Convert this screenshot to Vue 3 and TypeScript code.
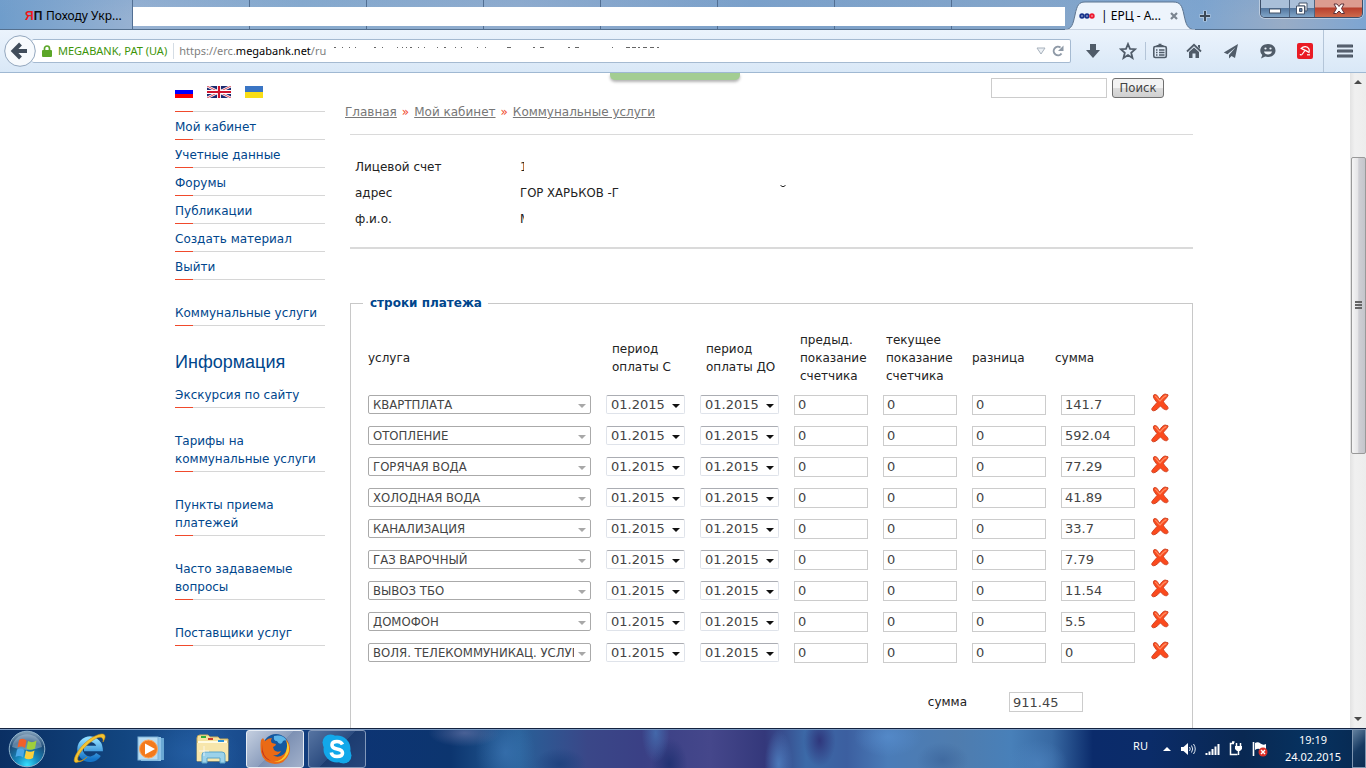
<script setup lang="ts">
import { ref } from 'vue'

interface PaymentRow {
  service: string
  from: string
  to: string
  previous: string
  current: string
  difference: string
  amount: string
}

const makeRow = (service: string, amount: string): PaymentRow => ({
  service,
  from: '01.2015',
  to: '01.2015',
  previous: '0',
  current: '0',
  difference: '0',
  amount,
})

const rows = ref<PaymentRow[]>([
  makeRow('КВАРТПЛАТА', '141.7'),
  makeRow('ОТОПЛЕНИЕ', '592.04'),
  makeRow('ГОРЯЧАЯ ВОДА', '77.29'),
  makeRow('ХОЛОДНАЯ ВОДА', '41.89'),
  makeRow('КАНАЛИЗАЦИЯ', '33.7'),
  makeRow('ГАЗ ВАРОЧНЫЙ', '7.79'),
  makeRow('ВЫВОЗ ТБО', '11.54'),
  makeRow('ДОМОФОН', '5.5'),
  makeRow('ВОЛЯ. ТЕЛЕКОММУНИКАЦ. УСЛУГИ', '0'),
])

const total = ref('911.45')
const query = ref('')

const accountMenu = ['Мой кабинет', 'Учетные данные', 'Форумы', 'Публикации', 'Создать материал', 'Выйти']
const infoMenu = [
  'Экскурсия по сайту',
  'Тарифы на коммунальные услуги',
  'Пункты приема платежей',
  'Часто задаваемые вопросы',
  'Поставщики услуг',
]

const removeRow = (index: number) => rows.value.splice(index, 1)
</script>

<template>
  <div class="window">
    <header class="tabs">
      <div class="tab">
        <span class="fav"><b>Я</b>П</span>
        <span>Походу Укр...</span>
      </div>
      <div class="tab-strip"><div class="blank"></div></div>
      <div class="active-tab">
        <svg class="tab-shape" viewBox="0 0 130 30" width="130" height="30" aria-hidden="true">
          <path d="M0 30C7 29 8 24 10 15C12 5 14 2 20 2H108C115 2 117 5 119 15C121 24 122 29 130 30Z" fill="#edf4fc" stroke="#5d7590" />
          <path d="M0 30H130" stroke="#e8f1fa" stroke-width="1" />
        </svg>
        <svg class="dots" viewBox="0 0 16 6" width="16" height="6" aria-hidden="true">
          <g fill="none" stroke-width="2"><circle cx="3" cy="3" r="1.7" stroke="#18348c" /><circle cx="8" cy="3" r="1.7" stroke="#18348c" /><circle cx="13" cy="3" r="1.7" stroke="#ef1a30" /></g>
        </svg>
        <span class="tab-title">| ЕРЦ - А...</span>
        <button class="bare" aria-label="Закрыть вкладку">
          <svg viewBox="0 0 8 8" width="8" height="8"><path d="M1 1L7 7M7 1L1 7" stroke="#7b8590" stroke-width="2.2" /></svg>
        </button>
      </div>
      <button class="bare new-tab" aria-label="Новая вкладка">
        <svg viewBox="0 0 12 12" width="12" height="12"><path d="M6 0.5V11.500M.5 6H11.500" stroke="#dce7f2" stroke-width="4" opacity=".5" /><path d="M6 1V11M1 6H11" stroke="#3d4a58" stroke-width="2" /></svg>
      </button>
      <div class="win-buttons">
        <button class="wb" aria-label="Свернуть"><svg viewBox="0 0 14 12" width="14" height="12"><rect x="1.500" y="6" width="11" height="4" fill="#fff" stroke="#45546b" /></svg></button>
        <button class="wb mid" aria-label="Развернуть"><svg viewBox="0 0 14 13" width="14" height="13"><path d="M4 1H12V9H10V4H4Z" fill="#fff" stroke="#45546b" /><path d="M1.500 4H9.500V12H1.500ZM4.500 6.500V9.500H7V6.500Z" fill="#fff" fill-rule="evenodd" stroke="#45546b" /></svg></button>
        <button class="wb close" aria-label="Закрыть"><svg viewBox="0 0 14 12" width="14" height="12"><path d="M2 1H5L7 3.500L9 1H12L9.500 5.500L12.500 10.500H9.500L7 8L4.500 10.500H1.500L4.500 5.500Z" fill="#fff" stroke="#5c3038" /></svg></button>
      </div>
    </header>

    <div class="navbar">
      <button class="bare back" aria-label="Назад">
        <svg viewBox="0 0 32 32" width="32" height="32"><circle cx="16" cy="16" r="15.3" fill="#f7fafd" stroke="#92a6bd" /><path d="M16.500 9L9.500 16L16.500 23M10 16H23" fill="none" stroke="#414d5b" stroke-width="4" /></svg>
      </button>
      <div class="url">
        <svg class="lock" viewBox="0 0 10 12" width="10" height="12" aria-hidden="true"><path d="M2.500 6V3.500A2.500 2.500 0 0 1 7.500 3.500V6" fill="none" stroke="#5ba628" stroke-width="1.700" /><rect y="5" width="10" height="7" rx="1" fill="#5ba628" /></svg>
        <span class="identity">MEGABANK, PAT (UA)</span>
        <span class="address">https://erc.<b>megabank.net</b>/ru</span>
        <svg class="trace" viewBox="0 0 336 4" width="336" height="4" aria-hidden="true"><path d="M8 1.500h2M16 1.500h1M23 1.500h1M29 1.500h1M48 1.500h2M56 1.500h1M71 1.500h1M76 1.500h1M80 1.500h1M84 1.500h2M92 1.500h1M98 1.500h1M111 1.500h1M118 1.500h2M129 1.500h1M135 1.500h1M151 1.500h1M159 1.500h1M181 1.500h4M207 1.500h2M214 1.500h4M242 1.500h2M249 1.500h4M286 1.500h1M300 1.500h4M306 1.500h4M312 1.500h2M317 1.500h4M324 1.500h4M331 1.500h2" stroke="#666" /></svg>
        <svg class="drop" viewBox="0 0 10 8" width="10" height="8" aria-hidden="true"><path d="M1 1H9L5 7Z" fill="#edf1f5" stroke="#a8b2bd" /></svg>
        <button class="bare" aria-label="Обновить"><svg viewBox="0 0 12 12" width="12" height="12"><path d="M9.500 8.500A4.300 4.300 0 1 1 8.500 2.500" fill="none" stroke="#8e99a6" stroke-width="2" /><path d="M11.500 .5V6H6Z" fill="#8e99a6" /></svg></button>
      </div>
      <button class="tool" aria-label="Загрузки"><svg viewBox="0 0 16 16" width="16" height="16"><path d="M5 1H11V7H15L8 15L1 7H5Z" fill="#505c69" /></svg></button>
      <button class="tool star" aria-label="В закладки"><svg viewBox="0 0 18 18" width="18" height="18"><path d="M9 2L11 6.800L16.200 7.200L12.200 10.700L13.500 16L9 13.100L4.500 16L5.800 10.700L1.800 7.200L7 6.800Z" fill="none" stroke="#505c69" stroke-width="1.800" /></svg></button>
      <button class="tool list" aria-label="Закладки"><svg viewBox="0 0 16 16" width="16" height="16"><rect x="1.800" y="3.500" width="12.500" height="11" rx="1.500" fill="none" stroke="#505c69" stroke-width="1.600" /><path d="M4.500 4V2H6.500V.8H9.500V2H11.500V4Z" fill="#505c69" /><path d="M4 7H5.500M7 7H12.500M4 9.500H5.500M7 9.500H12.500M4 12H5.500M7 12H12.500" stroke="#505c69" stroke-width="1.300" /></svg></button>
      <button class="tool" aria-label="Домой"><svg viewBox="0 0 16 16" width="16" height="16"><path d="M1 8.500L8 1.800L15 8.500" fill="none" stroke="#505c69" stroke-width="1.800" /><path d="M12 2H14V6L12 4ZM3 9L8 4.500L13 9V15H9.500V10.500H6.500V15H3Z" fill="#505c69" /></svg></button>
      <button class="tool" aria-label="Поделиться"><svg viewBox="0 0 16 16" width="16" height="16"><path d="M15 1L.8 9.500L4.500 11.300L12.500 4.500L6 12V15.500L8.500 13L12 15Z" fill="#505c69" /></svg></button>
      <button class="tool" aria-label="Чат"><svg viewBox="0 0 18 16" width="18" height="16"><path d="M9 1C13.500 1 16.500 3.800 16.500 7.500S13.500 14 9 14C8 14 7 13.900 6.200 13.600L2 15.500L3.300 12C2 10.800 1.300 9.300 1.300 7.500C1.300 3.800 4.500 1 9 1Z" fill="#505c69" /><path d="M5 8.500H13C12.500 12.500 5.500 12.500 5 8.500Z" fill="#edf4fb" /><circle cx="6.500" cy="5.500" r="1.100" fill="#edf4fb" /><circle cx="11.500" cy="5.500" r="1.100" fill="#edf4fb" /></svg></button>
      <button class="tool" aria-label="Avira"><svg viewBox="0 0 16 16" width="16" height="16"><rect width="16" height="16" rx="2" fill="#e91b24" /><path d="M4.200 5.500C6.500 2.800 10.500 3 12 6C12.500 7.500 12.300 8.500 12 9.500C9.500 7.500 6.500 6.500 4.200 5.500Z" fill="none" stroke="#fff" stroke-width="1.200" /><path d="M8 7.500L5 11.500C4.300 12.400 3.200 12 3.300 11" fill="none" stroke="#fff" stroke-width="1.200" /><path d="M10 11.800H13" stroke="#fff" stroke-width="1.200" /></svg></button>
      <button class="tool menu" aria-label="Меню"><svg viewBox="0 0 16 14" width="16" height="14"><path d="M1 2H15M1 7H15M1 12H15" stroke="#46515e" stroke-width="3" stroke-linecap="round" /><path d="M1 2H15M1 7H15M1 12H15" stroke="#66717e" /></svg></button>
    </div>

    <div class="viewport">
      <div class="page">
        <div class="green"></div>
        <div class="site">
          <aside>
            <div class="flags">
              <a href="#" aria-label="Русский"><svg viewBox="0 0 18 12" width="18" height="12"><rect width="18" height="12" fill="#fff" /><rect y="4" width="18" height="4" fill="#00f" /><rect y="8" width="18" height="4" fill="#f00" /></svg></a>
              <a href="#" aria-label="English"><svg viewBox="0 0 24 12" width="24" height="12"><rect width="24" height="12" fill="#1b2a70" /><path d="M0 0L24 12M24 0L0 12" stroke="#fff" stroke-width="2.500" /><path d="M0 0L24 12M24 0L0 12" stroke="#d0142c" stroke-width=".8" /><path d="M12 0V12M0 6H24" stroke="#fff" stroke-width="4" /><path d="M12 0V12M0 6H24" stroke="#d0142c" stroke-width="2.200" /></svg></a>
              <a href="#" aria-label="Українська"><svg viewBox="0 0 18 12" width="18" height="12"><rect width="18" height="6" fill="#3a75c4" /><rect y="6" width="18" height="6" fill="#f9dd16" /></svg></a>
            </div>
            <nav class="first">
              <a v-for="item in accountMenu" :key="item" href="#" class="item">{{ item }}</a>
            </nav>
            <nav class="spaced"><a href="#" class="item">Коммунальные услуги</a></nav>
            <h2>Информация</h2>
            <nav class="spaced info">
              <a v-for="item in infoMenu" :key="item" href="#" class="item">{{ item }}</a>
            </nav>
          </aside>

          <main>
            <form class="search" @submit.prevent>
              <input v-model="query" type="text" aria-label="Поиск по сайту" />
              <button type="submit">Поиск</button>
            </form>
            <div class="crumbs">
              <a href="#">Главная</a><span>»</span><a href="#">Мой кабинет</a><span>»</span><a href="#">Коммунальные услуги</a>
            </div>
            <dl>
              <div><dt>Лицевой счет</dt><dd><span class="sliver">1</span></dd></div>
              <div>
                <dt>адрес</dt>
                <dd>
                  <span class="street">ГОР ХАРЬКОВ -Г</span>
                  <svg class="breve" viewBox="0 0 6 3" width="6" height="3" aria-hidden="true"><path d="M.5 .5Q3 3 5.500 .5" fill="none" stroke="#222" /></svg>
                </dd>
              </div>
              <div><dt>ф.и.о.</dt><dd><span class="sliver">М</span></dd></div>
            </dl>

            <fieldset>
              <legend>строки платежа</legend>
              <table>
                <colgroup>
                  <col class="c-service" /><col class="c-date" /><col class="c-date" /><col class="c-num" /><col class="c-num" /><col class="c-diff" /><col class="c-sum" /><col />
                </colgroup>
                <thead>
                  <tr>
                    <th scope="col">услуга</th>
                    <th scope="col" class="in">период<br />оплаты С</th>
                    <th scope="col" class="in">период<br />оплаты ДО</th>
                    <th scope="col" class="in">предыд.<br />показание<br />счетчика</th>
                    <th scope="col" class="near">текущее<br />показание<br />счетчика</th>
                    <th scope="col">разница</th>
                    <th scope="col">сумма</th>
                    <td></td>
                  </tr>
                </thead>
                <tbody>
                  <tr v-for="(row, i) in rows" :key="row.service">
                    <td><span class="pick service"><select v-model="row.service" aria-label="услуга"><option>{{ row.service }}</option></select></span></td>
                    <td><span class="pick date"><select v-model="row.from" aria-label="период оплаты С"><option>01.2015</option></select></span></td>
                    <td><span class="pick date"><select v-model="row.to" aria-label="период оплаты ДО"><option>01.2015</option></select></span></td>
                    <td><input v-model="row.previous" type="text" aria-label="предыдущее показание счетчика" /></td>
                    <td><input v-model="row.current" type="text" aria-label="текущее показание счетчика" /></td>
                    <td><input v-model="row.difference" type="text" aria-label="разница" /></td>
                    <td class="sum"><input v-model="row.amount" type="text" aria-label="сумма" /></td>
                    <td>
                      <button type="button" class="bare" aria-label="Удалить строку" @click="removeRow(i)">
                        <svg viewBox="0 0 18 19" width="18" height="19"><path d="M3.500 1.500C6 1 7 4 8.500 6C10 4 11.500 1.500 14 1L17 1.800C17.500 3.500 13.500 6.500 12.500 8.500C13.500 11.500 17.500 13 17 15.500C15.500 18.500 11.500 15.500 9.500 13C7.500 14.500 5 18 2.500 17.800C0 17.500 .5 15.500 2 14L6 9.500C4.500 7.500 3 6 2.500 4C2.300 2.500 2.500 1.800 3.500 1.500Z" fill="#fb4a1d" stroke="#d04424" /><path d="M4 3C6 4 7 6.500 9 8C11 6 13 3 15.500 2.500" fill="none" stroke="#ff8a60" stroke-width="1.300" /></svg>
                      </button>
                    </td>
                  </tr>
                </tbody>
              </table>
              <div class="total">
                <label for="total">сумма</label>
                <input id="total" v-model="total" type="text" />
              </div>
            </fieldset>
          </main>
        </div>
      </div>
      <div class="scrollbar">
        <svg viewBox="0 0 8 4" width="8" height="4" aria-hidden="true"><path d="M0 4L4 0L8 4Z" fill="#4a4a4a" /></svg>
        <div class="track"><div class="thumb"><i></i><i></i><i></i></div></div>
        <svg viewBox="0 0 8 4" width="8" height="4" aria-hidden="true"><path d="M0 0L4 4L8 0Z" fill="#4a4a4a" /></svg>
      </div>
    </div>

    <footer>
      <button class="bare orb" aria-label="Пуск">
        <svg viewBox="0 0 38 38" width="38" height="38">
          <defs>
            <radialGradient id="orb" cx=".5" cy=".95" r=".9"><stop offset="0" stop-color="#35e0ff" /><stop offset=".35" stop-color="#1789bd" /><stop offset=".75" stop-color="#1c4a77" /><stop offset="1" stop-color="#7b9ab4" /></radialGradient>
          </defs>
          <circle cx="19" cy="19" r="17.800" fill="url(#orb)" stroke="#8fb3cc" />
          <path d="M4 17A15.200 15.200 0 0 1 34 17Q19 23 4 17Z" fill="#d7e6f0" opacity=".35" />
          <path d="M11 10Q15 7.500 18.500 10.500L17 18Q13.500 15.500 9.500 17.500Z" fill="#f0602a" />
          <path d="M20 11Q24 13.500 28.500 10.500L27 18.500Q22.500 21 18.500 18.500Z" fill="#9fcf3c" />
          <path d="M9 19.500Q13 17.500 16.500 20L15 27.500Q11.500 25 7.500 27Z" fill="#4aa8e8" />
          <path d="M18 20.500Q22 23 26.500 20.500L25 28Q20.500 30.500 16.500 28Z" fill="#fbd03c" />
        </svg>
      </button>
      <button class="bare app" aria-label="Internet Explorer">
        <svg viewBox="0 0 34 34" width="34" height="34">
          <defs><linearGradient id="ie" x2="0" y2="1"><stop stop-color="#8edcff" /><stop offset="1" stop-color="#1474c8" /></linearGradient></defs>
          <path d="M26.500 22.500A10 10 0 1 1 28 16.500H12" fill="none" stroke="url(#ie)" stroke-width="5.500" />
          <path d="M6 30C-1 33 2 22 12 12C20 4 32 -1 33 4C33.500 6 32 8 31 10C32 5 28 3 20 9C8 18 3 28 7 29C10 29 13 27 15 25C12 28 9 30 6 30Z" fill="#f4c432" stroke="#c98e14" stroke-width=".6" />
        </svg>
      </button>
      <button class="bare app" aria-label="Windows Media Player">
        <svg viewBox="0 0 28 28" width="28" height="28"><rect x="7" y="3" width="20" height="22" fill="#6aa8d4" /><rect x="4" y="2" width="20" height="24" fill="#8fc4e8" /><rect x="1" y="2" width="20" height="23" fill="#b8dcf2" stroke="#7db2d8" /><circle cx="11.500" cy="14" r="9" fill="#f47a1c" stroke="#fca65c" /><path d="M8 8.500L18 14L8 19.500Z" fill="#fff" /></svg>
      </button>
      <button class="bare app" aria-label="Проводник">
        <svg viewBox="0 0 34 30" width="34" height="30"><path d="M1 4Q1 1 4 1H12L14 3H22L24 5H32V27H1Z" fill="#f5e2a0" stroke="#c9ac5c" /><path d="M1 9H32V27H1Z" fill="#f7e6ab" /><path d="M2 8H31" stroke="#fffbe2" stroke-width="2" /><rect x="5" y="2" width="5" height="2" fill="#2fae3c" /><rect x="12" y="4" width="5" height="2" fill="#cf3d2b" /><rect x="22" y="6" width="6" height="2" fill="#2a92d8" /><path d="M6 29V21Q6 18 9 18H26Q29 18 29 21V29H24V24H11V29Z" fill="#9bd2ea" stroke="#5ba4c8" /><path d="M8 12V22M3 17H13" stroke="#fff" opacity=".7" /></svg>
      </button>
      <button class="running current" aria-label="Firefox">
        <svg viewBox="0 0 32 32" width="32" height="32"><circle cx="17" cy="14" r="13" fill="#15589f" /><path d="M15 3Q24 1 28 8Q24 6 23 10Q20 12 18 8Q14 8 15 3Z" fill="#5cb5e8" /><path d="M2 7L4 5L6 8Q9 5 13 5Q11 8 13 10L17 11Q17 13 14 14L15 17Q18 20 22 18Q20 23 14 22Q19 26 25 21Q30 16 27 6Q33 13 30 21Q26 31 16 31Q4 30 2 19Q1 12 2 7Z" fill="#ea6a16" /><path d="M27 7Q32 14 29 21Q24 30 15 29Q25 27 27 19Q29 12 27 7Z" fill="#fbc92d" /><path d="M3 11Q3 24 12 28Q5 26 3 19Z" fill="#c8341c" /></svg>
      </button>
      <button class="running skype" aria-label="Skype">
        <svg viewBox="0 0 32 32" width="32" height="32"><circle cx="16" cy="16" r="13.500" fill="#12a8ea" /><circle cx="9.500" cy="9.500" r="8" fill="#12a8ea" /><circle cx="22.500" cy="22.500" r="8" fill="#12a8ea" /><path d="M21.500 11.500Q20 8.500 16 8.500Q11 8.500 11 12Q11 15 16 16Q21.500 17 21.500 20Q21.500 23.500 16 23.500Q11 23.500 10.300 19.500" fill="none" stroke="#fff" stroke-width="3.600" /></svg>
      </button>
      <div class="tray">
        <span class="lang">RU</span>
        <svg viewBox="0 0 8 4" width="8" height="4" aria-hidden="true"><path d="M0 4L4 0L8 4Z" fill="#fff" /></svg>
        <svg viewBox="0 0 16 14" width="16" height="14" aria-hidden="true"><path d="M1 5H3.500L8 1V13L3.500 9H1Z" fill="#fff" /><path d="M9.500 5Q11 7 9.500 9M11.500 3.500Q14 7 11.500 10.500M13.500 2Q17 7 13.500 12" fill="none" stroke="#dfe8f2" /></svg>
        <svg viewBox="0 0 15 12" width="15" height="12" aria-hidden="true"><path d="M1.500 12V10M4.500 12V8.500M7.500 12V6M10.500 12V3.500M13.500 12V1" stroke="#fff" stroke-width="2" /></svg>
        <svg viewBox="0 0 14 15" width="14" height="15" aria-hidden="true"><path d="M8.500 13.500H1.500V2.500H5M3 1H5.500" fill="none" stroke="#fff" stroke-width="1.500" /><path d="M6 5H13V8L11 10H8L6 8Z" fill="#fff" /><path d="M7.500 5V2M11.500 5V2M9.500 10V14" stroke="#fff" stroke-width="1.500" /></svg>
        <svg viewBox="0 0 16 16" width="16" height="16" aria-hidden="true"><path d="M1.500 1V15" stroke="#fff" stroke-width="1.600" /><path d="M3 2Q6 .5 8.500 2.500T14 3V9Q11 10 8.500 8.500T3 9Z" fill="#fff" /><circle cx="11" cy="11" r="4.500" fill="#dc3028" /><path d="M9 9L13 13M13 9L9 13" stroke="#fff" stroke-width="1.400" /></svg>
        <div class="clock"><span>19:19</span><span>24.02.2015</span></div>
        <button class="show-desktop" aria-label="Показать рабочий стол"></button>
      </div>
    </footer>
  </div>
</template>

<style>
html,
body {
  margin: 0;
  overflow: hidden;
}
</style>

<style scoped>
.window {
  display: flex;
  flex-direction: column;
  height: 100vh;
  font: 12px/16px 'Noto Sans', sans-serif;
  background: #fff;
}
svg {
  display: block;
  flex: none;
}
* {
  box-sizing: border-box;
}
.bare {
  padding: 0;
  border: 0;
  background: none;
}

/* Tab strip */
.tabs {
  display: flex;
  height: 30px;
  flex: none;
  background: linear-gradient(rgba(120, 160, 205, 0.25), rgba(255, 255, 255, 0) 60%),
    linear-gradient(90deg, #6f9dcb, #98b2d2 10%, #88abce 22%, #92adce 38%, #7ba0c9 55%, #86a6c9 75%, #7ea5cf 88%, #98acc6 94%, #7da5d2);
  border-bottom: 1px solid #54708f;
}
.tab {
  display: flex;
  align-items: center;
  gap: 6px;
  width: 133px;
  padding: 2px 0 0 25px;
  border-right: 1px solid #526f93;
}
.fav {
  display: flex;
  width: 15px;
  font: bold 12px/16px 'Liberation Sans', sans-serif;
  color: #111;
}
.fav b {
  color: #f01818;
}
.tab-strip {
  flex: 1;
  padding: 7px 0 3px;
  background: repeating-linear-gradient(90deg, transparent 0 116px, #526f93 116px 117px);
}
.blank {
  height: 19px;
  background: #fff;
}
.active-tab {
  position: relative;
  display: flex;
  align-items: center;
  width: 128px;
  padding: 3px 15px 0 14px;
  flex: none;
  z-index: 1;
}
.tab-shape {
  position: absolute;
  inset: 0;
}
.dots,
.tab-title,
.active-tab .bare {
  position: relative;
}
.tab-title {
  flex: 1;
  padding-left: 6px;
  white-space: nowrap;
}
.new-tab {
  width: 24px;
  display: grid;
  place-items: center;
  padding-top: 3px;
}
.win-buttons {
  display: flex;
  height: 18px;
  margin: 0 3px 0 43px;
  border: 1px solid #3d4e68;
  border-top: 0;
  border-radius: 0 0 5px 5px;
  overflow: hidden;
  box-shadow: 0 0 0 1px rgba(255, 255, 255, 0.4);
}
.wb {
  display: grid;
  place-items: center;
  width: 28px;
  padding: 0;
  border: 0;
  background: linear-gradient(#a9bfd9 45%, #54779f 50%, #80a5c8);
}
.wb.mid {
  width: 26px;
  border: solid #4f6480;
  border-width: 0 1px;
}
.wb.close {
  width: 47px;
  background: linear-gradient(#dc9c90 40%, #b8402e 48%, #cd6a4c);
}

/* Navigation bar */
.navbar {
  display: flex;
  align-items: center;
  height: 43px;
  flex: none;
  padding-left: 4px;
  background: linear-gradient(#ebf3fc, #d9e8f7);
  border-bottom: 1px solid #9fb8d2;
}
.back {
  z-index: 1;
}
.url {
  display: flex;
  align-items: center;
  flex: 1;
  height: 24px;
  min-width: 0;
  margin: 0 3px 0 -4px;
  padding: 0 6px 0 10px;
  background: #fff;
  border: 1px solid #a5bad1;
  border-left: 0;
  border-radius: 2px;
  font-size: 11px;
}
.identity {
  margin-left: 6px;
  padding-right: 6px;
  border-right: 1px solid #d5dde5;
  color: #3c9408;
  white-space: nowrap;
}
.address {
  padding-left: 5px;
  color: #808080;
  white-space: nowrap;
}
.address b {
  font-weight: 400;
  color: #000;
}
.trace {
  align-self: flex-start;
  margin: 6px auto 0 0;
}
.drop {
  margin-right: 6px;
}
.tool {
  display: grid;
  place-items: center;
  width: 37px;
  height: 100%;
  padding: 0;
  border: 0;
  background: none;
}
.tool.star {
  width: 34px;
}
.tool.list {
  width: 30px;
  background: linear-gradient(#b4c5d8, #b4c5d8) left center / 1px 18px no-repeat;
}
.tool.menu {
  width: 43px;
  border-left: 1px solid #b4c5d8;
}

/* Page */
.viewport {
  display: flex;
  flex: 1;
  min-height: 0;
}
.page {
  position: relative;
  flex: 1;
  overflow: hidden;
  font: 12px/18px 'DejaVu Sans', sans-serif;
  color: #222;
}
.green {
  position: absolute;
  top: 0;
  left: 50%;
  width: 130px;
  height: 7px;
  margin-left: -65px;
  border-radius: 0 0 5px 5px;
  background: #a3cd92;
  box-shadow: 0 2px 3px rgba(0, 0, 0, 0.3);
}
.site {
  display: flex;
  gap: 20px;
  max-width: 1036px;
  margin: 0 auto;
  padding-left: 18px;
}
aside {
  width: 150px;
  flex: none;
}
.flags {
  display: flex;
  gap: 14px;
  height: 38px;
  padding-top: 13px;
}
nav {
  display: flex;
  flex-direction: column;
}
.first {
  padding-top: 1px;
  background: linear-gradient(90deg, #f04a2c 18px, #d6d6d6 18px) top / 100% 1px no-repeat;
}
.item {
  padding: 6px 0 4px;
  color: #00468c;
  text-decoration: none;
  background: linear-gradient(90deg, #f04a2c 18px, #d6d6d6 18px) bottom / 100% 1px no-repeat;
}
.spaced {
  padding-top: 18px;
  gap: 18px;
}
.info {
  padding: 0;
}
h2 {
  margin: 18px 0 0;
  font: 18px/36px 'Liberation Sans', sans-serif;
  color: #00468c;
}
main {
  flex: 1;
  min-width: 0;
}
.search {
  display: flex;
  justify-content: flex-end;
  align-items: center;
  gap: 5px;
  height: 30px;
  padding-right: 29px;
}
input {
  width: 74px;
  height: 20px;
  padding: 0 3px;
  border: 1px solid #ccc;
  background: #fff;
  font: inherit;
  font-size: 13px;
  color: #444;
  display: block;
}
.search input {
  width: 116px;
}
.search button {
  width: 52px;
  height: 20px;
  padding: 0;
  border: 1px solid #707070;
  border-radius: 3px;
  background: linear-gradient(#f3f3f3 50%, #ddd 50%, #d0d0d0);
  font: 13px/16px 'DejaVu Sans Condensed', 'DejaVu Sans', sans-serif;
  color: #444;
}
.crumbs {
  display: flex;
  gap: 5px;
  height: 31px;
  color: #f04a2c;
}
.crumbs a {
  color: #777;
}
dl {
  margin: 0 0 0 5px;
  padding: 19px 5px 15px;
  border: solid #dadada;
  border-width: 1px 0 2px;
}
dl div {
  display: flex;
  height: 26px;
  line-height: 26px;
}
dt {
  width: 165px;
}
dd {
  display: flex;
  margin: 0;
}
.sliver {
  position: relative;
}
.sliver::after {
  content: '';
  position: absolute;
  inset: 0 0 0 4px;
  background: #fff;
}
.street {
  width: 99px;
  overflow: hidden;
  white-space: nowrap;
  font-size: 13px;
  font-family: 'DejaVu Sans Condensed', 'DejaVu Sans', sans-serif;
}
.breve {
  margin: 5px 0 0 161px;
}
fieldset {
  min-width: 0;
  margin: 45px 0 0 5px;
  padding: 15px 0 40px 17px;
  border: 1px solid #c8c8c8;
}
legend {
  margin-left: -5px;
  padding: 0 6px 0 7px;
  font-weight: bold;
  color: #00468c;
}
table {
  width: 100%;
  table-layout: fixed;
  border-collapse: collapse;
}
.c-service {
  width: 238px;
}
.c-date {
  width: 94px;
}
.c-num {
  width: 89px;
}
.c-diff {
  width: 83px;
}
.c-sum {
  width: 96px;
}
th {
  height: 62px;
  padding: 0;
  font-weight: 400;
  text-align: left;
  white-space: nowrap;
}
th.in {
  padding-left: 6px;
}
th.near {
  padding-left: 3px;
}
td {
  height: 31px;
  padding: 0;
}
td.sum {
  padding-left: 6px;
}
.pick {
  position: relative;
  display: block;
}
.pick::after {
  content: '';
  position: absolute;
  right: 5px;
  top: 9px;
  border: solid transparent;
  border-width: 4px 4px 0;
  border-top-color: #111;
  pointer-events: none;
}
.service {
  width: 223px;
}
.date {
  width: 79px;
}
.service::after {
  border-top-color: #a8a8a8;
}
select {
  appearance: none;
  display: block;
  width: 100%;
  height: 19px;
  padding: 0 16px 0 4px;
  border: 1px solid #dfe3ea;
  border-top-color: #abadb3;
  border-radius: 2px;
  background: #fff;
  font: inherit;
  font-size: 13px;
  line-height: 17px;
  color: #444;
}
.service select {
  border-color: #aaa;
  font-family: 'DejaVu Sans Condensed', 'DejaVu Sans', sans-serif;
}
.total {
  display: flex;
  align-items: center;
  justify-content: flex-end;
  gap: 42px;
  padding: 24px 109px 0 0;
}

/* Scrollbar */
.scrollbar {
  display: flex;
  flex-direction: column;
  align-items: center;
  width: 16px;
  padding: 7px 0;
  background: linear-gradient(90deg, #e3e3e3, #f0f0f0 30%, #ededed);
}
.track {
  flex: 1;
  width: 15px;
  padding-top: 73px;
}
.thumb {
  display: flex;
  flex-direction: column;
  align-items: center;
  justify-content: center;
  gap: 1px;
  height: 53%;
  min-height: 40px;
  border: 1px solid #999;
  border-radius: 2px;
  background: linear-gradient(90deg, #f5f5f5, #e5e5e7 45%, #cfcfd4 52%, #c4c5cb);
}
.thumb i {
  width: 7px;
  height: 2px;
  background: #666;
}

/* Taskbar */
footer {
  display: flex;
  align-items: center;
  height: 40px;
  flex: none;
  padding-left: 8px;
  border-top: 1px solid #14233f;
  box-shadow: inset 0 1px #7d9cc4;
  background: radial-gradient(ellipse 36px 14px at 34% 10%, rgba(110, 120, 170, 0.6), transparent),
    radial-gradient(ellipse 30px 40px at 37% 60%, rgba(70, 130, 195, 0.5), transparent),
    radial-gradient(ellipse 26px 16px at 41% 90%, rgba(24, 60, 120, 0.7), transparent),
    radial-gradient(ellipse 14px 30px at 48% 10%, rgba(70, 120, 185, 0.7), transparent),
    radial-gradient(ellipse 18px 26px at 49% 90%, rgba(28, 46, 110, 0.8), transparent),
    radial-gradient(ellipse 14px 34px at 57% 90%, rgba(85, 140, 205, 0.7), transparent),
    radial-gradient(ellipse 16px 26px at 60% 30%, rgba(46, 50, 120, 0.9), transparent),
    radial-gradient(ellipse 34px 20px at 65% 20%, rgba(90, 145, 210, 0.6), transparent),
    radial-gradient(ellipse 26px 18px at 69% 80%, rgba(55, 95, 150, 0.6), transparent),
    radial-gradient(ellipse 30px 24px at 76% 90%, rgba(80, 135, 195, 0.6), transparent),
    radial-gradient(ellipse 50px 30px at 14% 60%, rgba(40, 100, 170, 0.6), transparent),
    linear-gradient(90deg, #0a2f63, #12457f 9%, #1e5598 15%, #0d3474 25%, #0c356f 33%, #286098 38%, #3a4788 43%, #3a4085 47%, #45478b 52%, #34387b 56%, #3c6aa8 59%, #3c5fa0 62%, #4a7cb8 65%, #4f7cae 70%, #4880b9 74%, #3869a3 77%, #0b2b6b 80%, #0b2c69 84%, #092852 91%, #063260 96%, #082951);
}
.orb {
  width: 38px;
}
.app {
  display: grid;
  place-items: center;
  width: 62px;
}
.orb + .app {
  margin-left: 12px;
}
.running {
  display: grid;
  place-items: center;
  width: 58px;
  height: 38px;
  margin: 1px 0 0 2px;
  padding: 0;
  border: 1px solid #b9c9de;
  border-radius: 3px;
  background: linear-gradient(135deg, #5674a2, #2c4c80 50%, #1c3c70 50%, #25467c);
}
.running.current {
  border-color: #e6ecf4;
  background: linear-gradient(135deg, #c4cfe0, #8d9fbe 50%, #7c90b3 50%, #a2b1cb);
}
.running.skype {
  margin-left: 4px;
  border-color: #8298ba;
}
.tray {
  display: flex;
  align-items: center;
  gap: 9px;
  height: 100%;
  margin-left: auto;
  color: #fff;
  font-size: 11px;
}
.lang {
  margin: 0 6px 6px 0;
}
.clock {
  display: flex;
  flex-direction: column;
  align-items: center;
  gap: 1px;
  width: 60px;
  margin-left: 6px;
}
.show-desktop {
  width: 14px;
  height: 100%;
  border: 1px solid #7e95b0;
  background: linear-gradient(135deg, #62809e, #173a62 50%, #0c2c52);
}
</style>
